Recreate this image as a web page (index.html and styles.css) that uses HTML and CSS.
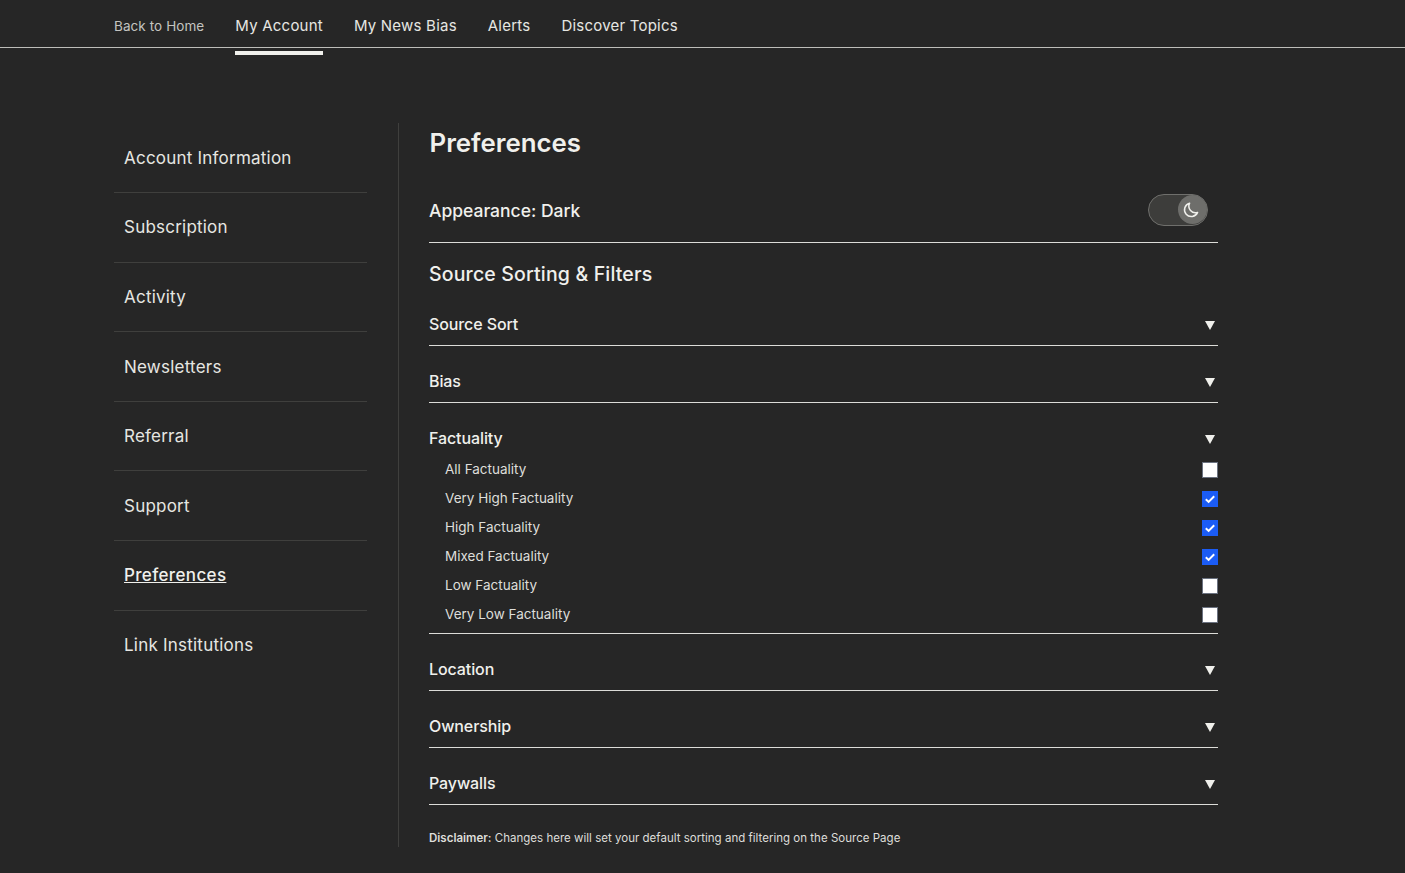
FILE: index.html
```html
<!DOCTYPE html>
<html>
<head>
    <title>Preferences</title>
    <link rel="stylesheet" href="styles.css">
</head>
<body>
    <div class="topbar">
        <a class="back">Back to Home</a>
        <a class="tab active">My Account</a>
        <a class="tab">My News Bias</a>
        <a class="tab">Alerts</a>
        <a class="tab">Discover Topics</a>
    </div>
    <div class="page">
        <ul class="side">
            <li>Account Information</li>
            <li>Subscription</li>
            <li>Activity</li>
            <li>Newsletters</li>
            <li>Referral</li>
            <li>Support</li>
            <li class="current">Preferences</li>
            <li>Link Institutions</li>
        </ul>
        <div class="main">
            <h1>Preferences</h1>
            <div class="appearance">
                <span>Appearance: Dark</span>
                <div class="toggle">
                    <div class="knob">
                        <svg width="18" height="18" viewBox="0 0 18 18"><path d="M7.6 2.2A6.8 6.8 0 1 0 15.6 11.4 6.6 6.6 0 0 1 7.6 2.2Z" fill="none" stroke="#f0f0ec" stroke-width="1.5" stroke-linejoin="round"/></svg>
                    </div>
                </div>
            </div>
            <h2>Source Sorting &amp; Filters</h2>
            <div class="group">
                <div class="group-head">Source Sort<i class="caret"></i></div>
            </div>
            <div class="group">
                <div class="group-head">Bias<i class="caret"></i></div>
            </div>
            <div class="group open">
                <div class="group-head">Factuality<i class="caret"></i></div>
                <div class="opt">All Factuality<i class="box"></i></div>
                <div class="opt">Very High Factuality<i class="box on"><svg width="16" height="16" viewBox="0 0 16 16"><path d="M3.8 8.3l2.8 2.6 5.6-5.6" fill="none" stroke="#fff" stroke-width="2"/></svg></i></div>
                <div class="opt">High Factuality<i class="box on"><svg width="16" height="16" viewBox="0 0 16 16"><path d="M3.8 8.3l2.8 2.6 5.6-5.6" fill="none" stroke="#fff" stroke-width="2"/></svg></i></div>
                <div class="opt">Mixed Factuality<i class="box on"><svg width="16" height="16" viewBox="0 0 16 16"><path d="M3.8 8.3l2.8 2.6 5.6-5.6" fill="none" stroke="#fff" stroke-width="2"/></svg></i></div>
                <div class="opt">Low Factuality<i class="box"></i></div>
                <div class="opt">Very Low Factuality<i class="box"></i></div>
            </div>
            <div class="group">
                <div class="group-head">Location<i class="caret"></i></div>
            </div>
            <div class="group">
                <div class="group-head">Ownership<i class="caret"></i></div>
            </div>
            <div class="group">
                <div class="group-head">Paywalls<i class="caret"></i></div>
            </div>
            <p class="note"><b>Disclaimer:</b> Changes here will set your default sorting and filtering on the Source Page</p>
        </div>
    </div>
</body>
</html>
```
FILE: styles.css
```css
*{
    margin: 0;
    padding: 0;
    box-sizing: border-box;
}
ul{
    list-style: none;
}
body{
    background-color: #262626;
    color: #f0f0ec;
    font-family: Inter, "Liberation Sans", sans-serif;
    height: 873px;
    overflow: hidden;
}
.topbar{
    height: 48px;
    border-bottom: 1px solid #bdbdb9;
    padding: 4px 0 0 114px;
    display: flex;
    align-items: center;
    gap: 31px;
}
.back{
    font-size: 13.5px;
    letter-spacing: .08px;
    color: #c4c4c0;
    margin-top: 1px;
}
.tab{
    font-size: 15px;
    letter-spacing: .22px;
    color: #e6e6e2;
    position: relative;
}
.tab.active:after{
    content: "";
    position: absolute;
    left: 0;
    right: 0;
    top: 35px;
    height: 4px;
    background-color: #f0f0ec;
}
.page{
    display: flex;
    padding: 75px 0 0 114px;
}
.side{
    width: 253px;
    margin-right: 31px;
    padding-top: .4px;
}
.side li{
    height: 69.6px;
    border-bottom: 1px solid #3f3f3d;
    padding: .3px 0 0 10px;
    display: flex;
    align-items: center;
    font-size: 17px;
    letter-spacing: .22px;
    color: #e6e6e2;
}
.side li:last-child{
    border-bottom: 0;
}
.side .current{
    font-weight: 500;
    letter-spacing: .35px;
    text-decoration: underline;
    color: #f0f0ec;
}
.main{
    width: 820px;
    height: 724px;
    border-left: 1px solid #3f3f3d;
    padding-left: 30px;
}
h1{
    font-size: 25.8px;
    font-weight: 600;
    line-height: 40px;
    padding-left: .5px;
}
.appearance{
    height: 80px;
    padding: 34px 10px 0 0;
    border-bottom: 1px solid #dcdcd8;
    display: flex;
    justify-content: space-between;
    font-size: 17.5px;
    font-weight: 500;
}
.appearance span{
    line-height: 27px;
}
.toggle{
    width: 60px;
    height: 32px;
    margin-top: -3px;
    border: 1.5px solid #6f6f6c;
    border-radius: 16px;
    background-color: #3d3d3b;
    display: flex;
    justify-content: flex-end;
}
.knob{
    width: 29px;
    height: 29px;
    border-radius: 50%;
    background-color: #6e6e6b;
    display: flex;
    align-items: center;
    justify-content: center;
    padding-right: 3px;
}
h2{
    font-size: 19.5px;
    letter-spacing: .16px;
    font-weight: 500;
    line-height: 30px;
    margin-top: 16px;
}
.group{
    border-bottom: 1px solid #dcdcd8;
    padding-bottom: 9px;
}
.group-head{
    height: 47px;
    padding-top: 26px;
    font-size: 16px;
    letter-spacing: -.1px;
    font-weight: 500;
    line-height: 19px;
    display: flex;
    justify-content: space-between;
    align-items: flex-start;
}
.caret{
    width: 0;
    height: 0;
    margin: 6px 3px 0 0;
    border-left: 5px solid transparent;
    border-right: 5px solid transparent;
    border-top: 9px solid #f0f0ec;
}
.open{
    padding-bottom: 5px;
}
.open .group-head{
    height: 51px;
}
.opt{
    height: 29px;
    padding-left: 16px;
    display: flex;
    justify-content: space-between;
    align-items: center;
    font-size: 13.5px;
    color: #dededa;
}
.box{
    width: 16px;
    height: 16px;
    margin-top: 2px;
    background-color: #fff;
    border: 1px solid #6b7280;
    display: block;
}
.box.on{
    background-color: #1b5cf5;
    border: 0;
}
.box svg{
    display: block;
}
.note{
    margin-top: 25px;
    font-size: 11.5px;
    letter-spacing: .015px;
    line-height: 16px;
    color: #dededa;
}
.note b{
    font-weight: 600;
}
```
